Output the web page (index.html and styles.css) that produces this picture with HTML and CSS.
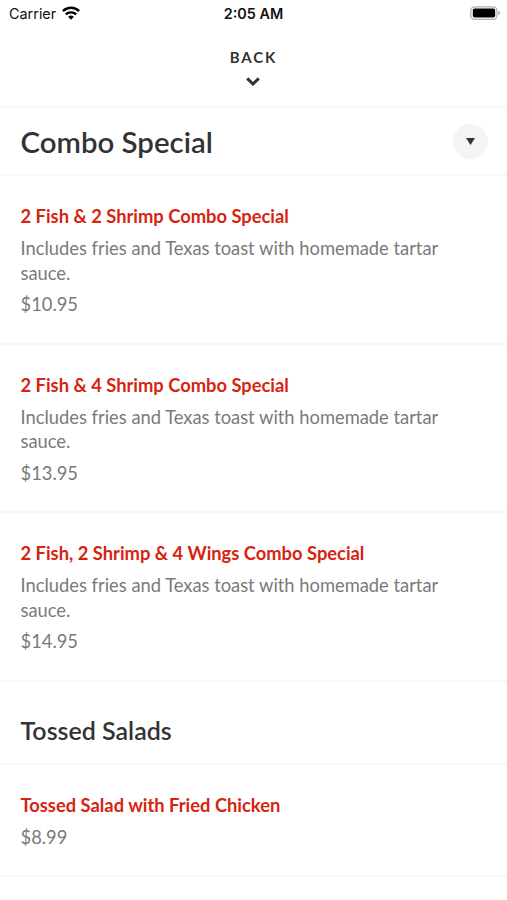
FILE: index.html
```html
<!DOCTYPE html>
<html lang="en">
<head>
    <meta charset="UTF-8">
    <meta name="viewport" content="width=device-width, initial-scale=1.0">
    <title>Menu - Combo Special</title>
    <link rel="stylesheet" href="styles.css">
</head>
<body>
    <!-- Status bar -->
    <div class="status-bar">
        <div class="carrier">
            <span>Carrier</span>
            <svg class="wifi" viewBox="0 0 18 14" width="18" height="14">
                <path d="M.9 5.1a11.6 11.6 0 0 1 16.2 0" />
                <path d="M3.8 8.4a7.6 7.6 0 0 1 10.4 0" />
                <path class="dot" d="M9 13.8l2.9-3a4.4 4.4 0 0 0-5.8 0z" />
            </svg>
        </div>
        <div class="time">2:05 AM</div>
        <svg class="battery" viewBox="0 0 31 14" width="31" height="14">
            <rect x="0.8" y="0.8" width="26.2" height="12.6" rx="3.8" fill="none" stroke="#b0b0b0" stroke-width="1.3" />
            <rect x="2.8" y="2.6" width="22.4" height="9" rx="1.8" fill="#000" />
            <path d="M28.4 4.8v4.4c2.4-.8 2.4-3.6 0-4.4z" fill="#b0b0b0" />
        </svg>
    </div>

    <!-- Back button -->
    <header class="back">
        <span>BACK</span>
        <svg viewBox="0 0 14 9" width="14" height="9">
            <path d="M1.2 1.4L7 7l5.8-5.6" />
        </svg>
    </header>

    <!-- Category picker -->
    <div class="category">
        <h1>Combo Special</h1>
        <button class="picker" aria-label="Choose category">
            <svg viewBox="0 0 9 7" width="9" height="7"><path d="M0 0h9L4.5 7z" /></svg>
        </button>
    </div>

    <!-- Menu items -->
    <div class="item">
        <h3>2 Fish &amp; 2 Shrimp Combo Special</h3>
        <p>Includes fries and Texas toast with homemade tartar sauce.</p>
        <div class="price">$10.95</div>
    </div>
    <div class="item">
        <h3>2 Fish &amp; 4 Shrimp Combo Special</h3>
        <p>Includes fries and Texas toast with homemade tartar sauce.</p>
        <div class="price">$13.95</div>
    </div>
    <div class="item">
        <h3>2 Fish, 2 Shrimp &amp; 4 Wings Combo Special</h3>
        <p>Includes fries and Texas toast with homemade tartar sauce.</p>
        <div class="price">$14.95</div>
    </div>

    <h2>Tossed Salads</h2>

    <div class="item short">
        <h3>Tossed Salad with Fried Chicken</h3>
        <div class="price">$8.99</div>
    </div>
</body>
</html>
```
FILE: styles.css
```css
* {
    margin: 0;
    padding: 0;
    box-sizing: border-box;
}

body {
    height: 900px;
    overflow: hidden;
    background: #fff;
    color: #333;
    font-family: Lato, "Liberation Sans", sans-serif;
}

/* Status bar */
.status-bar {
    display: grid;
    grid-template-columns: 1fr auto 1fr;
    align-items: center;
    height: 27px;
    padding: 0 6px 0 9px;
    color: #111;
    font-family: Inter, sans-serif;
    font-size: 14.4px;
}

.carrier {
    display: flex;
    align-items: center;
    gap: 6px;
}

.carrier svg {
    margin-top: -2px;
}

.time {
    margin: 0 3px 0 0;
    font-weight: 600;
}

.wifi path {
    fill: none;
    stroke: #000;
    stroke-width: 2.4;
}

.wifi .dot {
    fill: #000;
    stroke: none;
}

.battery {
    justify-self: end;
    margin-top: -1px;
}

/* Back button */
.back {
    display: flex;
    flex-direction: column;
    align-items: center;
    gap: 10px;
    height: 81px;
    padding: 20px 1px 0 0;
    border-bottom: 2px solid #f7f7f7;
    font-size: 15px;
    font-weight: 700;
    line-height: 20px;
    letter-spacing: 1.9px;
}

.back span {
    padding-left: 1px;
}

.back path {
    fill: none;
    stroke: #333;
    stroke-width: 3;
}

/* Category picker */
.category {
    display: flex;
    align-items: center;
    justify-content: space-between;
    height: 68px;
    padding: 0 19px 0 20.5px;
    border-bottom: 2px solid #f7f7f7;
}

h1 {
    font-size: 29.4px;
    font-weight: 600;
}

.picker {
    display: flex;
    align-items: center;
    justify-content: center;
    width: 35px;
    height: 35px;
    border: none;
    border-radius: 50%;
    background: #f4f4f4;
}

.picker path {
    fill: #333;
}

/* Menu items */
.item {
    height: 168.5px;
    padding: 28px 60px 0 20.5px;
    border-bottom: 2px solid #f7f7f7;
    color: #7a7a7a;
    font-size: 18.33px;
    line-height: 24.5px;
}

.item h3 {
    margin-bottom: 7.8px;
    color: #d62410;
    font-size: 18.33px;
    font-weight: 700;
}

.item p {
    margin-bottom: 7px;
}

.item.short {
    height: 112.5px;
}

h2 {
    height: 83px;
    padding: 33px 20.5px 0;
    border-bottom: 2px solid #f7f7f7;
    font-size: 25px;
    font-weight: 600;
    line-height: 30px;
}
```
